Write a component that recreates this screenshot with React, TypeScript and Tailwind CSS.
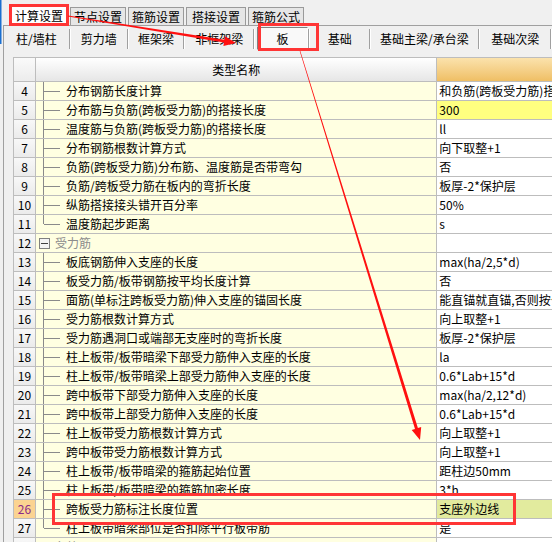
import React from "react";

type Row = { n: number; name: string; value: string; tree: "mid" | "last" | "group"; hl?: "yellow" | "sel" };

const rows: Row[] = [
  { n: 4, name: "分布钢筋长度计算", value: "和负筋(跨板受力筋)搭接计算", tree: "mid" },
  { n: 5, name: "分布筋与负筋(跨板受力筋)的搭接长度", value: "300", tree: "mid", hl: "yellow" },
  { n: 6, name: "温度筋与负筋(跨板受力筋)的搭接长度", value: "ll", tree: "mid" },
  { n: 7, name: "分布钢筋根数计算方式", value: "向下取整+1", tree: "mid" },
  { n: 8, name: "负筋(跨板受力筋)分布筋、温度筋是否带弯勾", value: "否", tree: "mid" },
  { n: 9, name: "负筋/跨板受力筋在板内的弯折长度", value: "板厚-2*保护层", tree: "mid" },
  { n: 10, name: "纵筋搭接接头错开百分率", value: "50%", tree: "mid" },
  { n: 11, name: "温度筋起步距离", value: "s", tree: "last" },
  { n: 12, name: "受力筋", value: "", tree: "group" },
  { n: 13, name: "板底钢筋伸入支座的长度", value: "max(ha/2,5*d)", tree: "mid" },
  { n: 14, name: "板受力筋/板带钢筋按平均长度计算", value: "否", tree: "mid" },
  { n: 15, name: "面筋(单标注跨板受力筋)伸入支座的锚固长度", value: "能直锚就直锚,否则按公式计算", tree: "mid" },
  { n: 16, name: "受力筋根数计算方式", value: "向上取整+1", tree: "mid" },
  { n: 17, name: "受力筋遇洞口或端部无支座时的弯折长度", value: "板厚-2*保护层", tree: "mid" },
  { n: 18, name: "柱上板带/板带暗梁下部受力筋伸入支座的长度", value: "la", tree: "mid" },
  { n: 19, name: "柱上板带/板带暗梁上部受力筋伸入支座的长度", value: "0.6*Lab+15*d", tree: "mid" },
  { n: 20, name: "跨中板带下部受力筋伸入支座的长度", value: "max(ha/2,12*d)", tree: "mid" },
  { n: 21, name: "跨中板带上部受力筋伸入支座的长度", value: "0.6*Lab+15*d", tree: "mid" },
  { n: 22, name: "柱上板带受力筋根数计算方式", value: "向上取整+1", tree: "mid" },
  { n: 23, name: "跨中板带受力筋根数计算方式", value: "向上取整+1", tree: "mid" },
  { n: 24, name: "柱上板带/板带暗梁的箍筋起始位置", value: "距柱边50mm", tree: "mid" },
  { n: 25, name: "柱上板带/板带暗梁的箍筋加密长度", value: "3*h", tree: "mid" },
  { n: 26, name: "跨板受力筋标注长度位置", value: "支座外边线", tree: "mid", hl: "sel" },
  { n: 27, name: "柱上板带暗梁部位是否扣除平行板带筋", value: "是", tree: "last" },
  { n: 28, name: "负筋", value: "", tree: "group" },
];

function arrow(x1: number, y1: number, x2: number, y2: number, w1: number, w2: number, hl: number, hw: number) {
  const dx = x2 - x1, dy = y2 - y1;
  const L = Math.hypot(dx, dy);
  const ux = dx / L, uy = dy / L;
  const px = -uy, py = ux;
  const bx = x2 - ux * hl, by = y2 - uy * hl;
  const pts = [
    [x1 + (px * w1) / 2, y1 + (py * w1) / 2],
    [bx + (px * w2) / 2, by + (py * w2) / 2],
    [bx + px * hw, by + py * hw],
    [x2, y2],
    [bx - px * hw, by - py * hw],
    [bx - (px * w2) / 2, by - (py * w2) / 2],
    [x1 - (px * w1) / 2, y1 - (py * w1) / 2],
  ];
  return pts.map((p) => p[0].toFixed(1) + "," + p[1].toFixed(1)).join(" ");
}

function TopTab({ label, w, selected }: { label: string; w: string; selected?: boolean }) {
  return (
    <div
      className={
        selected
          ? "flex h-[20px] w-[58px] items-center justify-center border border-b-0 border-[#a0a0a0] bg-white text-[12px] text-black"
          : "flex h-[18px] items-center justify-center border border-b-0 border-[#9a9a9a] bg-[#e6e6e6] text-[12px] text-black " + w
      }
    >
      {label}
    </div>
  );
}

function SubTab({ label, w }: { label: string; w: string }) {
  return (
    <div className={"flex h-full items-center " + w}>
      <div className="flex flex-1 items-center justify-center text-[12px] text-black">{label}</div>
      <div className="h-[20px] w-[1px] bg-[#a0a0a0]" />
      <div className="h-[20px] w-[1px] bg-white" />
    </div>
  );
}

function TreeCell({ row }: { row: Row }) {
  if (row.tree === "group") {
    return (
      <div className="flex h-full items-center">
        <div className="ml-[3px] flex h-[11px] w-[11px] items-center justify-center border border-[#808080] bg-[#f4f4f4]">
          <div className="h-[1px] w-[7px] bg-[#404040]" />
        </div>
        <span className="ml-[5px] text-[12px] text-[#8c8c8c]">{row.name}</span>
      </div>
    );
  }
  return (
    <div className="relative flex h-full items-center">
      <span
        className={
          "absolute left-[7px] top-0 w-[1px] bg-[#8a8a8a] " + (row.tree === "last" ? "h-[9px]" : "h-[18px]")
        }
      />
      <span className="absolute left-[8px] top-[9px] h-[1px] w-[16px] bg-[#8a8a8a]" />
      <span className="ml-[30px] whitespace-nowrap text-[12px] text-black">{row.name}</span>
    </div>
  );
}

export default function App() {
  return (
    <div
      className="relative h-[542px] w-[552px] overflow-hidden bg-[#f0f0f0]"
      style={{ fontFamily: '"Noto Sans CJK SC", "Noto Sans", sans-serif' }}
    >
      {/* top tab bar */}
      <div className="flex h-[25px] items-end gap-[2px] pl-[10px]">
        <TopTab label="计算设置" w="" selected />
        <TopTab label="节点设置" w="w-[56px]" />
        <TopTab label="箍筋设置" w="w-[56px]" />
        <TopTab label="搭接设置" w="w-[60px]" />
        <TopTab label="箍筋公式" w="w-[56px]" />
      </div>

      {/* frame */}
      <div className="ml-[3px] flex flex-col border-l border-t border-[#a0a0a0]">
        {/* sub tabs */}
        <div className="flex h-[25px] items-center">
          <SubTab label="柱/墙柱" w="w-[67px]" />
          <SubTab label="剪力墙" w="w-[58px]" />
          <SubTab label="框架梁" w="w-[57px]" />
          <SubTab label="非框架梁" w="w-[70px]" />
          <div className="ml-[2px] flex h-[23px] w-[51px] items-center justify-center border-l border-t border-[#808080] border-b border-r border-b-white border-r-white bg-[#f9f9f9] text-[12px] text-black">
            板
          </div>
          <div className="h-[20px] w-[1px] bg-[#a0a0a0]" />
          <div className="mr-[1px] h-[20px] w-[1px] bg-white" />
          <SubTab label="基础" w="w-[60px]" />
          <SubTab label="基础主梁/承台梁" w="w-[110px]" />
          <SubTab label="基础次梁" w="w-[72px]" />
        </div>

        {/* table */}
        <div className="pl-[9px] pt-[6px]">
          <div className="w-[620px] border-l border-t border-[#bdbdbd] bg-white">
            {/* header */}
            <div className="flex h-[24px] border-b border-[#bdbdbd]">
              <div className="w-[22px] border-r border-[#bdbdbd] bg-gradient-to-b from-[#fafafa] to-[#ececec]" />
              <div className="flex w-[401px] items-center justify-center bg-gradient-to-b from-[#ffffff] to-[#e6e6e6] text-[12px] text-black">
                类型名称
              </div>
              <div className="w-[197px] border-l border-[#bdbdbd] bg-gradient-to-b from-[#fbe2ac] to-[#efbf64]" />
            </div>
            {/* rows */}
            {rows.map((r) => (
              <div key={r.n} className="flex h-[19px] border-b border-[#bdbdbd]">
                <div
                  className={
                    "flex w-[22px] items-center justify-center border-r border-[#bdbdbd] text-[12px] " +
                    (r.hl === "sel"
                      ? "bg-[#fbd391] text-[#8a2a8a]"
                      : "bg-gradient-to-b from-[#f8f8f8] to-[#ebebeb] text-black")
                  }
                >
                  {r.n}
                </div>
                <div className="w-[401px] overflow-hidden bg-[#ffffe1]">
                  <TreeCell row={r} />
                </div>
                <div
                  className={
                    "flex w-[197px] items-center overflow-hidden whitespace-nowrap border-l border-[#bdbdbd] pl-[2px] text-[12px] text-black " +
                    (r.hl === "yellow" ? "bg-[#ffff80]" : r.hl === "sel" ? "bg-[#e2eb9e]" : "bg-white")
                  }
                >
                  {r.value}
                </div>
              </div>
            ))}
          </div>
        </div>
      </div>

      {/* annotations */}
      <svg className="pointer-events-none absolute left-0 top-0" width="552" height="542" viewBox="0 0 552 542">
        <rect x="0" y="0" width="1.5" height="44" fill="#1a6fd0" />
        <rect x="10.5" y="5.5" width="57" height="19" fill="none" stroke="#ff3535" strokeWidth="3" />
        <rect x="259.5" y="24.5" width="58" height="25" fill="none" stroke="#ff3535" strokeWidth="3" />
        <rect x="53.5" y="494.5" width="461" height="29" fill="none" stroke="#ff3535" strokeWidth="3" />
        <polygon points={arrow(68, 16, 236, 43, 0.8, 2.6, 12, 5)} fill="#ff1010" />
        <polygon points={arrow(300, 51, 420, 440, 0.6, 3, 12, 5)} fill="#ff1010" />
      </svg>
    </div>
  );
}
